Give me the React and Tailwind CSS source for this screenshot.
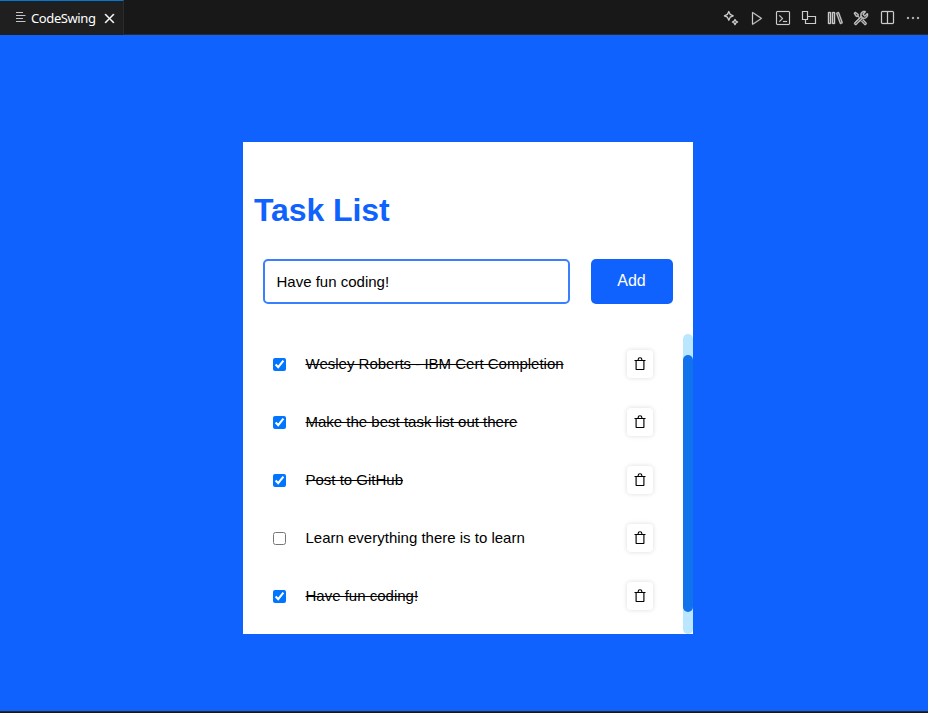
import React from "react";
import { VscPlay, VscTerminal, VscLibrary, VscTools, VscSplitHorizontal, VscEllipsis, VscClose } from "react-icons/vsc";

const tasks = [
  { text: "Wesley Roberts - IBM Cert Completion", done: true },
  { text: "Make the best task list out there", done: true },
  { text: "Post to GitHub", done: true },
  { text: "Learn everything there is to learn", done: false },
  { text: "Have fun coding!", done: true },
];

function SparkleIcon() {
  return (
    <svg width="16" height="16" viewBox="0 0 16 16" fill="none" stroke="currentColor" strokeWidth="1.3" strokeLinejoin="round">
      <path d="M5.8 1.5 7.2 4.4 10.2 5.8 7.2 7.2 5.8 10.2 4.4 7.2 1.4 5.8 4.4 4.4Z" />
      <path d="M12 9.5 12.9 11.1 14.6 12 12.9 12.9 12 14.6 11.1 12.9 9.4 12 11.1 11.1Z" />
    </svg>
  );
}

function LayoutIcon() {
  return (
    <svg width="16" height="16" viewBox="0 0 16 16" fill="none" stroke="currentColor" strokeWidth="1.2">
      <path d="M1.5 1.5h5v8h-5z" />
      <path d="M6.5 6.5h8v7h-10v-4" />
    </svg>
  );
}

function TrashIcon() {
  return (
    <svg width="14" height="16" viewBox="0 0 14 16" fill="none" stroke="currentColor" strokeWidth="1.15">
      <path d="M1.5 4.5h11M3.1 4.5v8.4q0 .6.7.6h6.4q.7 0 .7-.6V4.5M5.2 4.5V3.3q0-1.6 1.8-1.6t1.8 1.6v1.2" />
    </svg>
  );
}

function TitleBar() {
  return (
    <header className="flex h-[35px] shrink-0 justify-between border-b border-[#2b2b2b] bg-[#181818]">
      <div className="flex h-[35px] w-[124px] items-center border-t border-r border-t-[#0078d4] border-r-[#2b2b2b] bg-[#1f1f1f] pl-[15px] text-white">
        <svg className="mb-0.5 shrink-0" width="12" height="12" viewBox="0 0 12 12" stroke="#c5c5c5">
          <path d="M1 1.5h7M1 4.5h9.5M1 7.5h7M1 10.5h9.5" />
        </svg>
        <span className="mt-0.5 ml-1 w-[66px] font-['Noto_Sans',sans-serif] text-[13px] tracking-[-0.4px] whitespace-nowrap">CodeSwing</span>
        <VscClose className="ml-1 shrink-0" size={17} stroke="currentColor" strokeWidth={0.4} />
      </div>
      <div className="flex items-center gap-2.5 pt-px pr-[7px] text-[#cccccc]">
        <SparkleIcon />
        <VscPlay size={16} stroke="currentColor" strokeWidth={0.25} />
        <VscTerminal size={16} stroke="currentColor" strokeWidth={0.25} />
        <LayoutIcon />
        <VscLibrary size={16} stroke="currentColor" strokeWidth={0.4} />
        <VscTools size={16} stroke="currentColor" strokeWidth={0.5} />
        <VscSplitHorizontal size={16} stroke="currentColor" strokeWidth={0.25} />
        <VscEllipsis size={16} stroke="currentColor" strokeWidth={0.25} />
      </div>
    </header>
  );
}

function Task({ task }) {
  return (
    <li className="flex h-[58px] items-center pr-[30px] pl-[30px]">
      <input type="checkbox" defaultChecked={task.done} className="mt-[3px] size-[13px] shrink-0" />
      <span className={task.done ? "mt-0.5 ml-[19.5px] flex-1 line-through" : "mt-0.5 ml-[19.5px] flex-1"}>{task.text}</span>
      <button className="mt-px flex h-7 w-[26px] items-center justify-center rounded-[4px] bg-white shadow-[0_0_5px_rgba(0,0,0,0.14)]">
        <TrashIcon />
      </button>
    </li>
  );
}

export default function App() {
  return (
    <div className="flex h-[713px] w-[928px] flex-col overflow-hidden bg-[#0f62fe] font-['Liberation_Sans',Arial,sans-serif] text-[15px] text-black">
      <TitleBar />
      <main className="flex flex-1 pt-[107px] pl-[243px]">
        <section className="flex h-[492px] w-[450px] flex-col bg-white">
          <h1 className="mt-[49px] ml-[11px] text-[32px] leading-[38px] font-bold tracking-[-0.1px] text-[#0f62fe]">Task List</h1>
          <form className="mt-[30px] flex gap-[21px] pl-5">
            <input defaultValue="Have fun coding!" className="h-[45px] w-[307px] rounded-[5px] border-2 border-[#3880ff] px-[11.5px] text-[15px] outline-none" />
            <button type="button" className="h-[45px] w-[82px] rounded-[5px] bg-[#0f62fe] pr-px pb-px text-base text-white">Add</button>
          </form>
          <div className="mt-[30px] flex h-[300px]">
            <ul className="flex-1">
              {tasks.map((task) => <Task key={task.text} task={task} />)}
            </ul>
            <div className="h-[300px] w-2.5 rounded-[5px] bg-[#bae6ff] pt-[21px]">
              <div className="h-[257px] w-2.5 rounded-[5px] bg-[#1073eb]" />
            </div>
          </div>
        </section>
      </main>
      <footer className="h-0.5 shrink-0 border-t border-[#2b2b2b] bg-[#181818]" />
    </div>
  );
}
